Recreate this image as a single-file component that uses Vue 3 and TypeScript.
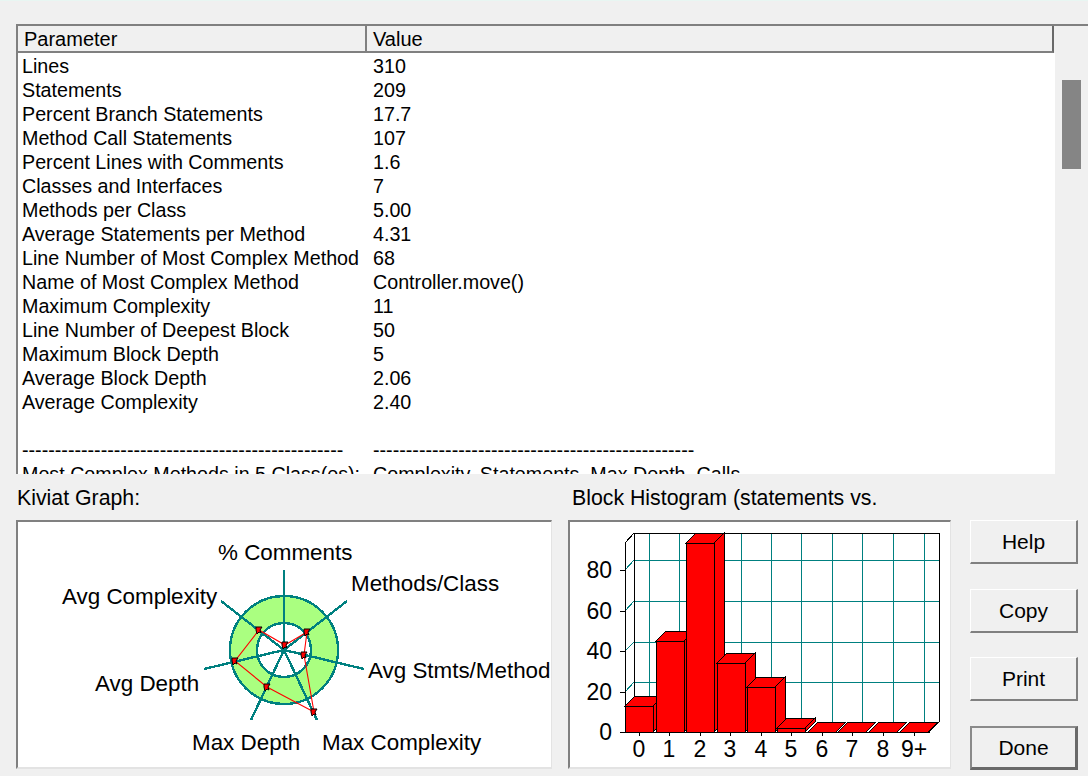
<script setup lang="ts">
const rows: [string, string][] = [
  ['Lines', '310'],
  ['Statements', '209'],
  ['Percent Branch Statements', '17.7'],
  ['Method Call Statements', '107'],
  ['Percent Lines with Comments', '1.6'],
  ['Classes and Interfaces', '7'],
  ['Methods per Class', '5.00'],
  ['Average Statements per Method', '4.31'],
  ['Line Number of Most Complex Method', '68'],
  ['Name of Most Complex Method', 'Controller.move()'],
  ['Maximum Complexity', '11'],
  ['Line Number of Deepest Block', '50'],
  ['Maximum Block Depth', '5'],
  ['Average Block Depth', '2.06'],
  ['Average Complexity', '2.40'],
  ['\u00a0', '\u00a0'],
  ['-'.repeat(49), '-'.repeat(49)],
  ['Most Complex Methods in 5 Class(es):', 'Complexity, Statements, Max Depth, Calls'],
]

const spokes = [
  [284, 570], [347, 601], [364, 669], [317, 720], [251, 720], [204, 669], [221, 601],
]
const kPoints: [number, number][] = [
  [285, 645], [307, 632], [304, 655], [314, 712], [267, 687], [235, 661], [259, 630],
]
const kPoly = kPoints.map((p) => p.join(',')).join(' ')
const kLabels = [
  { t: '% Comments', x: 218, y: 560 },
  { t: 'Methods/Class', x: 351, y: 591 },
  { t: 'Avg Stmts/Method', x: 368, y: 678 },
  { t: 'Max Complexity', x: 322, y: 750 },
  { t: 'Max Depth', x: 192, y: 750 },
  { t: 'Avg Depth', x: 95, y: 691 },
  { t: 'Avg Complexity', x: 62, y: 604 },
]

const backH = [560, 601, 642, 682]
const frontT = [570, 611, 651, 692]
const backV = [649, 679, 710, 741, 771, 801, 832, 862, 893, 924]
const yLabels = [
  { t: '80', y: 578 }, { t: '60', y: 619 }, { t: '40', y: 659 }, { t: '20', y: 700 }, { t: '0', y: 740 },
]
const xLabels = [
  { t: '0', x: 639 }, { t: '1', x: 669 }, { t: '2', x: 700 }, { t: '3', x: 730 }, { t: '4', x: 761 },
  { t: '5', x: 791 }, { t: '6', x: 822 }, { t: '7', x: 852 }, { t: '8', x: 883 }, { t: '9+', x: 914 },
]
const bars = [
  { x: 625, top: 706 }, { x: 656, top: 641 }, { x: 686, top: 543 }, { x: 717, top: 663 }, { x: 747, top: 687 },
  { x: 777, top: 728 }, { x: 808, top: 732 }, { x: 838, top: 732 }, { x: 869, top: 732 }, { x: 900, top: 732 },
]
const W = 28
const D = 10
const B = 732
function barTop(b: { x: number; top: number }): string {
  return `${b.x},${b.top} ${b.x + D},${b.top - D} ${b.x + W + D},${b.top - D} ${b.x + W},${b.top}`
}
function barSide(b: { x: number; top: number }): string {
  return `${b.x + W},${b.top} ${b.x + W + D},${b.top - D} ${b.x + W + D},${B - D} ${b.x + W},${B}`
}
const buttons = ['Help', 'Copy', 'Print', 'Done']
</script>

<template>
  <div class="window">
    <section class="list">
      <div class="head">
        <div class="hcell first">Parameter</div>
        <div class="hcell second">Value</div>
      </div>
      <div class="body">
        <div class="rows">
          <div v-for="(r, i) in rows" :key="i" class="row">
            <span class="c1">{{ r[0] }}</span>
            <span class="c2">{{ r[1] }}</span>
          </div>
        </div>
        <div class="track"><div class="thumb"></div></div>
      </div>
    </section>

    <div class="captions">
      <span class="cap-k">Kiviat Graph:</span>
      <span class="cap-h">Block Histogram (statements vs.</span>
    </div>

    <div class="lower">
      <div class="panel kiviat">
        <svg viewBox="18 522 533 245" width="533" height="245">
          <g shape-rendering="crispEdges">
            <circle cx="284" cy="650" r="54" fill="#aaff80" stroke="#008080" stroke-width="2.4" />
            <circle cx="284" cy="650" r="27" fill="#fff" stroke="#008080" stroke-width="2.4" />
            <line v-for="(s, i) in spokes" :key="i" x1="284" y1="650" :x2="s[0]" :y2="s[1]" stroke="#008080" stroke-width="2.4" />
          </g>
          <polygon :points="kPoly" fill="none" stroke="#ff0000" stroke-width="1.1" />
          <g v-for="(p, i) in kPoints" :key="'p' + i">
            <path :d="`M${p[0] - 3} ${p[1] - 3}h6l-2 3 1 3-2-1-2 2-1-4z`" stroke="#000" stroke-width="1" fill="#ff0000" />
          </g>
          <text v-for="l in kLabels" :key="l.t" :x="l.x" :y="l.y" class="chart-text">{{ l.t }}</text>
        </svg>
      </div>

      <div class="panel histo">
        <svg viewBox="570 522 380 245" width="380" height="245">
          <g shape-rendering="crispEdges">
            <line v-for="y in backH" :key="'h' + y" x1="634" :y1="y" x2="939" :y2="y" stroke="#008080" stroke-width="1" />
            <line v-for="x in backV" :key="'v' + x" :x1="x" y1="533" :x2="x" y2="722" stroke="#008080" stroke-width="1" />
            <line v-for="(y, i) in frontT" :key="'d' + y" x1="625" :y1="y" x2="634" :y2="backH[i]" stroke="#008080" stroke-width="1" />
            <path d="M625 543L634 533H939V722M634 533V722M625 543V732M625 732L634 722M939 722L929 732" fill="none" stroke="#000" stroke-width="1" />
            <line v-for="y in [...frontT, 732]" :key="'t' + y" x1="620" :y1="y" x2="625" :y2="y" stroke="#000" stroke-width="1" />
            <line v-for="l in xLabels" :key="'x' + l.x" :x1="l.x" y1="732" :x2="l.x" y2="736" stroke="#000" stroke-width="1" />
            <line x1="620" y1="732" x2="930" y2="732" stroke="#000" stroke-width="1" />
            <g v-for="(b, i) in bars" :key="'b' + i">
              <polygon :points="barSide(b)" fill="#ff0000" stroke="#000" stroke-width="1" />
              <polygon :points="barTop(b)" fill="#ff0000" stroke="#000" stroke-width="1" />
              <rect :x="b.x" :y="b.top" :width="W" :height="B - b.top" fill="#ff0000" stroke="#000" stroke-width="1" />
            </g>
          </g>
          <text v-for="l in yLabels" :key="'yl' + l.t" x="612" :y="l.y" text-anchor="end" class="chart-text axis">{{ l.t }}</text>
          <text v-for="l in xLabels" :key="'xl' + l.t" :x="l.x" y="757" text-anchor="middle" class="chart-text axis">{{ l.t }}</text>
        </svg>
      </div>

      <div class="buttons">
        <button v-for="b in buttons" :key="b" class="btn" :class="{ primary: b === 'Done' }" type="button">{{ b }}</button>
      </div>
    </div>
  </div>
</template>

<style scoped>
.window {
  width: 1088px;
  height: 776px;
  box-sizing: border-box;
  border-top: 1px solid #e8f6f2;
  background: #f0f0f0;
  padding-top: 23px;
  overflow: hidden;
  font-family: "Liberation Sans", Arial, sans-serif;
  font-size: 19.7px;
  color: #000;
  display: flex;
  flex-direction: column;
}
.list {
  margin-left: 16px;
  height: 450px;
  display: flex;
  flex-direction: column;
  border-top: 2px solid #808080;
  border-left: 2px solid #808080;
  box-sizing: border-box;
  overflow: hidden;
}
.head {
  height: 27px;
  flex: none;
  display: flex;
  box-sizing: border-box;
  width: 1036px;
  border-bottom: 2px solid #808080;
  border-right: 2px solid #696969;
}
.hcell {
  box-sizing: border-box;
  line-height: 27px;
  padding-left: 6px;
  font-size: 20px;
}
.hcell.first {
  width: 349px;
  border-right: 2px solid #808080;
}
.hcell.second {
  flex: 1;
}
.body {
  flex: 1;
  display: flex;
  min-height: 0;
}
.rows {
  width: 1037px;
  background: #fff;
  overflow: hidden;
  padding-top: 1px;
}
.row {
  height: 24px;
  line-height: 24px;
  display: flex;
  white-space: nowrap;
}
.c1 {
  width: 351px;
  margin-left: 4px;
  flex: none;
}
.track {
  flex: 1;
  padding: 27px 7px 0;
}
.thumb {
  height: 89px;
  background: #858585;
}
.captions {
  height: 46px;
  flex: none;
  display: flex;
  align-items: center;
  font-size: 21.3px;
  padding-top: 3px;
  box-sizing: border-box;
}
.cap-k {
  margin-left: 17px;
  width: 555px;
}
.lower {
  display: flex;
  margin-left: 16px;
  align-items: flex-start;
}
.panel {
  background: #fff;
  box-sizing: border-box;
  height: 249px;
  border-top: 2px solid #808080;
  border-left: 2px solid #808080;
  border-right: 1px solid #e3e3e3;
  border-bottom: 2px solid #e3e3e3;
  overflow: hidden;
}
.panel svg {
  display: block;
}
.kiviat {
  width: 536px;
}
.histo {
  width: 383px;
  margin-left: 16px;
}
.buttons {
  margin-left: 19px;
  display: flex;
  flex-direction: column;
  gap: 25px;
}
.btn {
  width: 108px;
  height: 44px;
  box-sizing: border-box;
  padding: 0;
  margin: 0;
  background: #f0f0f0;
  color: #000;
  font: inherit;
  font-size: 21px;
  border-style: solid;
  border-width: 1px 2px 2px 1px;
  border-color: #fff #808080 #808080 #fff;
}
.btn:nth-child(3) {
  margin-top: -1px;
}
.btn.primary {
  border-width: 2px 3px 3px 2px;
  border-color: #8a8a8a #696969 #696969 #8a8a8a;
}
.chart-text {
  font-family: "Liberation Sans", Arial, sans-serif;
  font-size: 22.4px;
  fill: #000;
}
.chart-text.axis {
  font-size: 23px;
}
</style>
